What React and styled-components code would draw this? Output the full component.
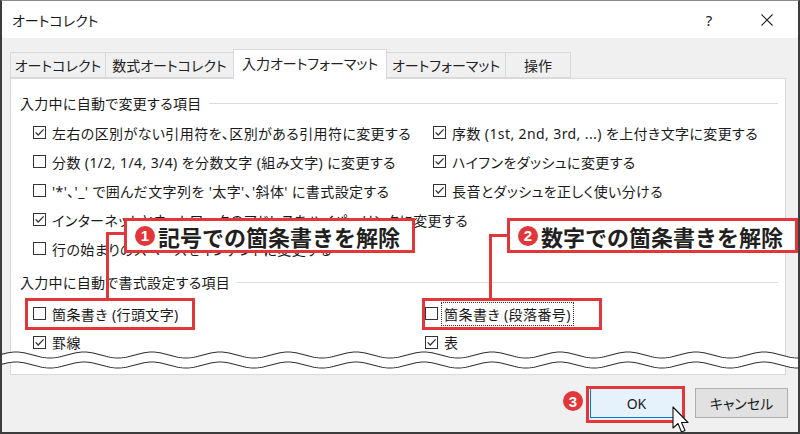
import React from "react";
import styled, { createGlobalStyle } from "styled-components";

const RED = "#e1373b";
const UI_FONT = `"Noto Sans", "Noto Sans CJK JP", sans-serif`;

const GlobalStyle = createGlobalStyle`
  html, body {
    margin: 0;
    padding: 0;
    background: #fff;
  }
  body {
    font-family: ${UI_FONT};
  }
  * {
    box-sizing: border-box;
  }
`;

const Window = styled.div`
  position: relative;
  width: 800px;
  height: 434px;
  display: flex;
  flex-direction: column;
  background: #f0f0f0;
  border: 2px solid #3c3c3c;
  border-top: 1px solid #8c8c8c;
  overflow: hidden;
  color: #1a1a1a;
  font-feature-settings: "palt";
`;

const TitleBar = styled.div`
  height: 37px;
  display: flex;
  align-items: center;
  padding: 0 8px 0 10px;
  background: #fff;
  font-size: 14px;
`;

const Title = styled.span`
  flex: 1;
`;

const TitleButton = styled.div`
  width: ${(p) => p.$w}px;
  height: 37px;
  display: flex;
  align-items: center;
  justify-content: center;
  font-size: 15px;
  color: #222;
`;

const TabStrip = styled.div`
  display: flex;
  align-items: flex-end;
  padding: 11px 0 0 8px;
  position: relative;
  z-index: 2;
`;

const Tab = styled.div`
  width: ${(p) => p.$w}px;
  height: ${(p) => (p.$active ? 30 : 26)}px;
  margin-bottom: ${(p) => (p.$active ? -1 : 0)}px;
  margin-left: -1px;
  display: flex;
  align-items: center;
  justify-content: center;
  padding-bottom: ${(p) => (p.$active ? 3 : 0)}px;
  background: ${(p) => (p.$active ? "#fff" : "#f0f0f0")};
  border: 1px solid #d9d9d9;
  border-bottom: ${(p) => (p.$active ? "none" : "1px solid #d9d9d9")};
  font-size: 14px;
  color: #222;
  &:first-child {
    margin-left: 0;
  }
`;

const Panel = styled.div`
  height: 297px;
  margin: 0 12px 0 8px;
  padding: 14px 7px 0 9px;
  background: #fff;
  border: 1px solid #d9d9d9;
`;

const GroupHeading = styled.div`
  display: flex;
  align-items: center;
  gap: 7px;
  height: 20px;
  margin-top: ${(p) => p.$gap || 0}px;
  font-size: 14px;
  letter-spacing: 0.3px;
  &::after {
    content: "";
    flex: 1;
    height: 1px;
    background: #dcdcdc;
  }
`;

const Columns = styled.div`
  display: flex;
  padding-left: 13px;
  margin-top: ${(p) => p.$gap}px;
`;

const Column = styled.div`
  width: ${(p) => p.$w || 400}px;
  display: flex;
  flex-direction: column;
`;

const Option = styled.div`
  height: ${(p) => p.$h || 29}px;
  display: flex;
  align-items: center;
  gap: 3px;
  font-size: 14px;
  letter-spacing: 0.4px;
  white-space: nowrap;
`;

const Box = styled.span`
  width: 13px;
  height: 13px;
  flex: none;
  display: flex;
  align-items: center;
  justify-content: center;
  border: 1px solid #333;
  background: #fff;
`;

const Label = styled.span`
  padding: 1px 2px;
  border: 1px dotted ${(p) => (p.$focus ? "#333" : "transparent")};
`;

const Footer = styled.div`
  display: flex;
  justify-content: flex-end;
  gap: 12px;
  padding: 13px 10px 0 0;
`;

const Button = styled.div`
  width: 93px;
  height: 30px;
  display: flex;
  align-items: center;
  justify-content: center;
  font-size: 14px;
  color: #1a1a1a;
  background: ${(p) => (p.$primary ? "#e5f1fb" : "#e1e1e1")};
  border: 1px solid ${(p) => (p.$primary ? "#0078d7" : "#adadad")};
`;

/* annotation layer: positions are page pixels minus window border (2, 1) */
const Callout = styled.div`
  position: absolute;
  left: ${(p) => p.$x}px;
  top: ${(p) => p.$y}px;
  width: ${(p) => p.$w}px;
  height: 35px;
  z-index: 5;
  display: flex;
  align-items: center;
  gap: 3px;
  padding-left: 8px;
  background: #fff;
  border: 3px solid ${RED};
  font-size: 22px;
  font-weight: 700;
  color: #231f20;
  font-feature-settings: normal;
  white-space: nowrap;
`;

const Badge = styled.span`
  width: ${(p) => p.$d || 20}px;
  height: ${(p) => p.$d || 20}px;
  flex: none;
  display: inline-flex;
  align-items: center;
  justify-content: center;
  border-radius: 50%;
  background: ${RED};
  color: #fff;
  font-family: "Liberation Sans", sans-serif;
  font-size: ${(p) => (p.$d ? p.$d - 5 : 15)}px;
  font-weight: 700;
  line-height: 1;
`;

const FloatingBadge = styled(Badge)`
  position: absolute;
  left: ${(p) => p.$x}px;
  top: ${(p) => p.$y}px;
  z-index: 5;
`;

const Leader = styled.div`
  position: absolute;
  left: ${(p) => p.$x}px;
  top: ${(p) => p.$y}px;
  width: ${(p) => p.$w}px;
  height: ${(p) => p.$h}px;
  z-index: 4;
  border-top: 3px solid ${RED};
  border-left: 3px solid ${RED};
`;

const Highlight = styled.div`
  position: absolute;
  left: ${(p) => p.$x}px;
  top: ${(p) => p.$y}px;
  width: ${(p) => p.$w}px;
  height: ${(p) => p.$h}px;
  z-index: 4;
  border: 3px solid ${RED};
  pointer-events: none;
`;

const Wave = styled.svg`
  position: absolute;
  left: -2px;
  top: 345px;
  z-index: 3;
`;

const Cursor = styled.svg`
  position: absolute;
  left: 670px;
  top: 405px;
  z-index: 6;
`;

const Check = () => (
  <svg width="11" height="11" viewBox="0 0 11 11">
    <path d="M1.6 5.4 L4.2 8 L9.6 2.4" fill="none" stroke="#333" strokeWidth="1.3" />
  </svg>
);

const CheckOption = ({ checked, focus, h, children }) => (
  <Option $h={h}>
    <Box>{checked && <Check />}</Box>
    <Label $focus={focus}>{children}</Label>
  </Option>
);

const waveY = (x, c) => c - 3 * Math.cos((2 * Math.PI * (x - 14)) / 68);
const wavePoints = (c) => {
  const pts = [];
  for (let x = 0; x <= 800; x += 2) pts.push([x, waveY(x, c)]);
  return pts;
};
const toPath = (pts, start = "M") =>
  pts.map(([x, y], i) => `${i === 0 ? start : "L"}${x} ${y.toFixed(2)}`).join(" ");

const CutLine = () => {
  const upper = wavePoints(354);
  const lower = wavePoints(364);
  const band = toPath(upper) + " " + toPath([...lower].reverse(), "L") + " Z";
  return (
    <Wave width="804" height="28" viewBox="-2 345 804 28">
      <path d={band} fill="#fff" />
      <path d={toPath(upper)} fill="none" stroke="#333" strokeWidth="1.1" />
      <path d={toPath(lower)} fill="none" stroke="#333" strokeWidth="1.1" />
    </Wave>
  );
};

export default function App() {
  return (
    <>
      <GlobalStyle />
      <Window>
        <TitleBar>
          <Title>オートコレクト</Title>
          <TitleButton $w={30}>?</TitleButton>
          <TitleButton $w={20} />
          <TitleButton $w={46}>
            <svg width="12" height="12" viewBox="0 0 12 12">
              <path d="M0.5 0.5 L11.5 11.5 M11.5 0.5 L0.5 11.5" stroke="#222" strokeWidth="1.1" />
            </svg>
          </TitleButton>
        </TitleBar>

        <TabStrip>
          <Tab $w={96}>オートコレクト</Tab>
          <Tab $w={129}>数式オートコレクト</Tab>
          <Tab $w={154} $active>入力オートフォーマット</Tab>
          <Tab $w={120}>オートフォーマット</Tab>
          <Tab $w={66}>操作</Tab>
        </TabStrip>

        <Panel>
          <GroupHeading>入力中に自動で変更する項目</GroupHeading>
          <Columns $gap={5}>
            <Column>
              <CheckOption checked>左右の区別がない引用符を、区別がある引用符に変更する</CheckOption>
              <CheckOption>分数 (1/2, 1/4, 3/4) を分数文字 (組み文字) に変更する</CheckOption>
              <CheckOption>'*'、'_' で囲んだ文字列を '太字'、'斜体' に書式設定する</CheckOption>
              <CheckOption checked>インターネットとネットワークのアドレスをハイパーリンクに変更する</CheckOption>
              <CheckOption>行の始まりのスペースをインデントに変更する</CheckOption>
            </Column>
            <Column $w={360}>
              <CheckOption checked>序数 (1st, 2nd, 3rd, ...) を上付き文字に変更する</CheckOption>
              <CheckOption checked>ハイフンをダッシュに変更する</CheckOption>
              <CheckOption checked>長音とダッシュを正しく使い分ける</CheckOption>
            </Column>
          </Columns>

          <GroupHeading $gap={9}>入力中に自動で書式設定する項目</GroupHeading>
          <Columns $gap={7}>
            <Column>
              <CheckOption h={29}>箇条書き (行頭文字)</CheckOption>
              <CheckOption h={28} checked>罫線</CheckOption>
            </Column>
            <Column $w={360}>
              <CheckOption h={29} focus>箇条書き (段落番号)</CheckOption>
              <CheckOption h={28} checked>表</CheckOption>
            </Column>
          </Columns>
        </Panel>

        <Footer>
          <Button $primary>OK</Button>
          <Button>キャンセル</Button>
        </Footer>

        <CutLine />

        <Leader $x={104} $y={231} $w={21} $h={67} />
        <Callout $x={122} $y={217} $w={291}>
          <Badge>1</Badge>記号での箇条書きを解除
        </Callout>
        <Highlight $x={23} $y={297} $w={170} $h={32} />

        <Leader $x={487} $y={233} $w={20} $h={65} />
        <Callout $x={505} $y={217} $w={291}>
          <Badge>2</Badge>数字での箇条書きを解除
        </Callout>
        <Highlight $x={420} $y={297} $w={180} $h={32} />

        <FloatingBadge $x={561} $y={390} $d={20}>3</FloatingBadge>
        <Highlight $x={584} $y={385} $w={99} $h={37} />

        <Cursor width="20" height="30" viewBox="0 0 20 30">
          <path
            d="M1 1 L1 22 L6 17.5 L9.5 26 L13 24.5 L9.5 16.5 L16 16.5 Z"
            fill="#fff"
            stroke="#111"
            strokeWidth="1.1"
            strokeLinejoin="round"
          />
        </Cursor>
      </Window>
    </>
  );
}
